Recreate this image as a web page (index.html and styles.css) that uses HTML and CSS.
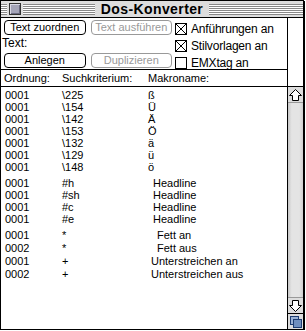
FILE: index.html
```html
<!DOCTYPE html>
<html>

<head>
    <meta charset="utf-8">
    <title>Dos-Konverter</title>
    <link rel="stylesheet" href="styles.css">
</head>

<body>
    <div class="window">
        <div class="titlebar">
            <div class="stripes left">
                <span class="close-wrap"><span class="closebox"></span></span>
            </div>
            <div class="title">Dos-Konverter</div>
            <div class="stripes right"></div>
        </div>

        <div class="content">
            <div class="main">
                <div class="controls">
                    <div class="buttons">
                        <div class="btn-row">
                            <span class="btn">Text zuordnen</span>
                            <span class="btn disabled">Text ausführen</span>
                        </div>
                        <div class="label">Text:</div>
                        <div class="btn-row">
                            <span class="btn">Anlegen</span>
                            <span class="btn disabled">Duplizieren</span>
                        </div>
                    </div>
                    <div class="checks">
                        <div class="check">
                            <svg class="box" width="12" height="12" viewBox="0 0 12 12">
                                <rect x="0.5" y="0.5" width="11" height="11" fill="#fff" stroke="#000" />
                                <path d="M1 1 L11 11 M11 1 L1 11" stroke="#000" stroke-width="1" />
                            </svg>
                            Anführungen an
                        </div>
                        <div class="check">
                            <svg class="box" width="12" height="12" viewBox="0 0 12 12">
                                <rect x="0.5" y="0.5" width="11" height="11" fill="#fff" stroke="#000" />
                                <path d="M1 1 L11 11 M11 1 L1 11" stroke="#000" stroke-width="1" />
                            </svg>
                            Stilvorlagen an
                        </div>
                        <div class="check">
                            <svg class="box" width="12" height="12" viewBox="0 0 12 12">
                                <rect x="0.5" y="0.5" width="11" height="11" fill="#fff" stroke="#000" />
                            </svg>
                            EMXtag an
                        </div>
                    </div>
                </div>

                <div class="list-head">
                    <span>Ordnung:</span>
                    <span>Suchkriterium:</span>
                    <span>Makroname:</span>
                </div>

                <div class="list">
                    <div class="row"><span>0001</span><span>\225</span><span>ß</span></div>
                    <div class="row"><span>0001</span><span>\154</span><span>Ü</span></div>
                    <div class="row"><span>0001</span><span>\142</span><span>Ä</span></div>
                    <div class="row"><span>0001</span><span>\153</span><span>Ö</span></div>
                    <div class="row"><span>0001</span><span>\132</span><span>ä</span></div>
                    <div class="row"><span>0001</span><span>\129</span><span>ü</span></div>
                    <div class="row"><span>0001</span><span>\148</span><span>ö</span></div>
                    <div class="row tall"><span>0001</span><span>#h</span><span class="m-head">Headline</span></div>
                    <div class="row"><span>0001</span><span>#sh</span><span class="m-head">Headline</span></div>
                    <div class="row"><span>0001</span><span>#c</span><span class="m-head">Headline</span></div>
                    <div class="row"><span>0001</span><span>#e</span><span class="m-head">Headline</span></div>
                    <div class="row tall"><span>0001</span><span>*</span><span class="m-bold">Fett an</span></div>
                    <div class="row mid"><span>0002</span><span>*</span><span class="m-bold">Fett aus</span></div>
                    <div class="row mid"><span>0001</span><span>+</span><span class="m-under">Unterstreichen an</span></div>
                    <div class="row mid"><span>0002</span><span>+</span><span class="m-under">Unterstreichen aus</span></div>
                </div>
            </div>

            <div class="scroll">
                <div class="scroll-top"></div>
                <div class="arrow up">
                    <svg width="13" height="12" viewBox="0 0 13 12">
                        <path d="M6.5 0.5 L12.5 6.5 H9.5 V11.5 H3.5 V6.5 H0.5 Z" fill="#fff" stroke="#000" />
                    </svg>
                </div>
                <div class="track"></div>
                <div class="arrow down">
                    <svg width="13" height="12" viewBox="0 0 13 12">
                        <path d="M6.5 11.5 L12.5 5.5 H9.5 V0.5 H3.5 V5.5 H0.5 Z" fill="#fff" stroke="#000" />
                    </svg>
                </div>
                <div class="grow">
                    <svg width="13" height="13" viewBox="0 0 13 13">
                        <rect x="1.5" y="1.5" width="8" height="8" fill="#9bb3d6" stroke="#1d3d72" />
                        <rect x="4.5" y="4.5" width="8" height="8" fill="#6f8fbf" stroke="#1d3d72" />
                    </svg>
                </div>
            </div>
        </div>
    </div>
</body>

</html>
```

FILE: styles.css
```css
/* Mac-Fenster im Platinum-Stil */
* {
    box-sizing: border-box;
}

body {
    margin: 0;
    background: #fff;
    font-family: "Liberation Sans", Arial, sans-serif;
    color: #000;
}

.window {
    width: 304px;
    height: 330px;
    border: 1px solid #000;
    box-shadow: 1px 1px 0 #000;
    display: flex;
    flex-direction: column;
}

/* Titelleiste */
.titlebar {
    height: 17px;
    flex: none;
    background: #ddd;
    border-bottom: 1px solid #000;
    display: flex;
    align-items: center;
}

.stripes {
    flex: 1;
    height: 11px;
    background: repeating-linear-gradient(#888 0 1px, #fff 1px 2px);
    display: flex;
    align-items: center;
}

.close-wrap {
    margin-left: 6px;
    padding: 0 2px;
    height: 13px;
    background: #ddd;
    display: flex;
    align-items: center;
}

.closebox {
    width: 12px;
    height: 12px;
    border: 1px solid #333;
    background: #a4a4b8;
    box-shadow: inset 1px 1px 0 #d8d8e4, inset -1px -1px 0 #6a6a80;
}

.title {
    padding: 0 6px;
    font-size: 14px;
    font-weight: bold;
    letter-spacing: 0.4px;
}

/* Inhalt */
.content {
    flex: 1;
    display: flex;
}

.main {
    flex: 1;
    display: flex;
    flex-direction: column;
}

.controls {
    height: 52px;
    border-bottom: 1px solid #000;
    display: flex;
    padding: 2px 0 0 1px;
}

.buttons {
    width: 170px;
}

.btn-row {
    display: flex;
    gap: 5px;
    padding-left: 2px;
}

.btn {
    width: 82px;
    height: 15px;
    border: 1px solid #000;
    border-radius: 4px;
    font-size: 11px;
    line-height: 13px;
    text-align: center;
    white-space: nowrap;
}

.btn.disabled {
    color: #999;
    border-color: #999;
}

.label {
    height: 18px;
    font-size: 12px;
    line-height: 17px;
}

.checks {
    margin-left: 3px;
}

.check {
    height: 17px;
    display: flex;
    align-items: center;
    gap: 4px;
    font-size: 12px;
    letter-spacing: -0.2px;
}

.list-head {
    height: 17px;
    border-bottom: 1px solid #000;
    display: grid;
    grid-template-columns: 58px 86px 1fr;
    padding-left: 3px;
    font-size: 11px;
    line-height: 16px;
}

.list {
    flex: 1;
    padding-top: 2px;
}

.row {
    height: 12px;
    display: grid;
    grid-template-columns: 57px 86px 1fr;
    padding-left: 4px;
    font-size: 11px;
    line-height: 12px;
}

.row.tall {
    margin-top: 4px;
}

.row.mid {
    margin-top: 1px;
}

.m-head {
    padding-left: 5px;
}

.m-bold {
    padding-left: 9px;
}

.m-under {
    padding-left: 3px;
}

/* Rollbalken */
.scroll {
    width: 16px;
    border-left: 1px solid #000;
    display: flex;
    flex-direction: column;
}

.scroll-top {
    height: 69px;
    border-bottom: 1px solid #000;
    background: #fff;
}

.arrow {
    height: 16px;
    background: #ddd;
    display: flex;
    align-items: center;
    justify-content: center;
}

.arrow.up {
    border-bottom: 1px solid #999;
}

.arrow.down {
    border-top: 1px solid #999;
}

.track {
    flex: 1;
    background: linear-gradient(to right, #c8c8c8, #e4e4e4 25%, #e4e4e4 75%, #cfcfcf);
}

.grow {
    height: 16px;
    border-top: 1px solid #000;
    background: #ddd;
    display: flex;
    align-items: center;
    justify-content: center;
}
```
